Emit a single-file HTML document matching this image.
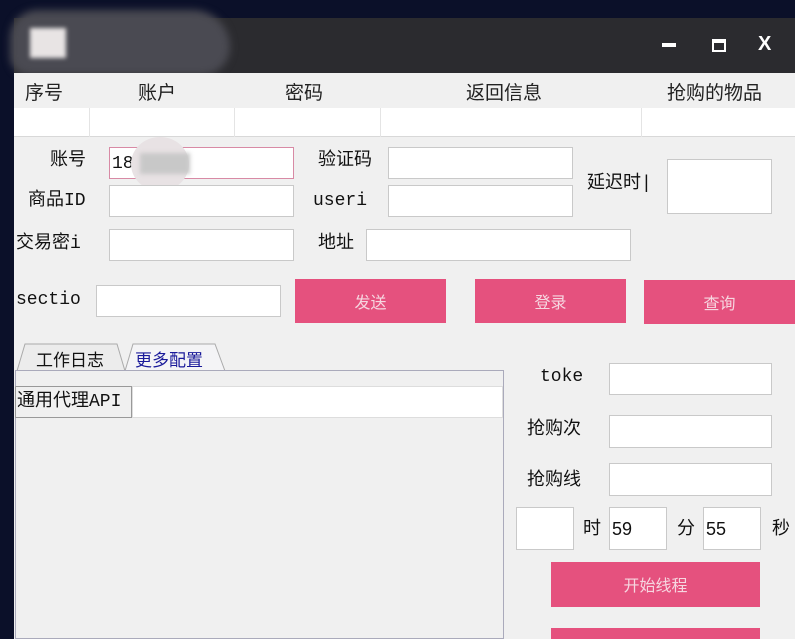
<!DOCTYPE html>
<html><head><meta charset="utf-8"><style>
*{margin:0;padding:0;box-sizing:border-box}
body{width:795px;height:639px;overflow:hidden;background:#0b1029;position:relative;font-family:"Liberation Mono","Noto Sans CJK SC",monospace;font-size:18px;color:#111}
.a{position:absolute}
.in{position:absolute;background:#fff;border:1px solid #c9c9c9}
.lb{position:absolute;white-space:nowrap;line-height:22px}
.bt{position:absolute;background:#e5517e;color:#f6d6e0;text-align:center;font-family:"Noto Sans CJK SC",sans-serif;font-size:16px}
.hd{position:absolute;top:78px;font-family:"Noto Sans CJK SC",sans-serif;font-size:19px;color:#222}
</style></head><body>
<div class="a" style="left:14px;top:18px;width:781px;height:55px;background:#2b2b2f"></div>
<div class="a" style="left:10px;top:10px;width:220px;height:65px;border-radius:30px 40px 30px 20px;background:#4a4a52;filter:blur(4px)"></div>
<div class="a" style="left:30px;top:28px;width:36px;height:30px;background:#e8e4e4;filter:blur(2px)"></div>
<div class="a" style="left:662px;top:43px;width:14px;height:4px;background:#fff"></div>
<div class="a" style="left:712px;top:39px;width:14px;height:13px;border:2px solid #fff;border-top-width:4px"></div>
<div class="lb" style="left:758px;top:33px;color:#fff;font-family:'Liberation Sans';font-size:20px;font-weight:bold">X</div>
<div class="a" style="left:14px;top:73px;width:781px;height:566px;background:#f0f0f0"></div>
<div class="a" style="left:14px;top:73px;width:781px;height:35px;background:#f0f0f0"></div>
<div class="a" style="left:14px;top:108px;width:781px;height:29px;background:#fff;border-bottom:1px solid #d8d8d8"></div>
<div class="a" style="left:89px;top:108px;width:1px;height:29px;background:#e4e4e4"></div>
<div class="a" style="left:234px;top:108px;width:1px;height:29px;background:#e4e4e4"></div>
<div class="a" style="left:380px;top:108px;width:1px;height:29px;background:#e4e4e4"></div>
<div class="a" style="left:641px;top:108px;width:1px;height:29px;background:#e4e4e4"></div>
<div class="hd" style="left:25px">序号</div>
<div class="hd" style="left:138px">账户</div>
<div class="hd" style="left:285px">密码</div>
<div class="hd" style="left:466px">返回信息</div>
<div class="hd" style="left:667px">抢购的物品</div>

<div class="lb" style="left:50px;top:150px">账号</div>
<div class="in" style="left:109px;top:147px;width:185px;height:32px;border-color:#d88aa5"></div>
<div class="lb" style="left:112px;top:153px">18</div>
<div class="a" style="left:131px;top:137px;width:58px;height:54px;border-radius:50%;background:#e8e2e4"></div>
<div class="a" style="left:140px;top:153px;width:50px;height:21px;background:#c8c8c8;filter:blur(2px)"></div>
<div class="lb" style="left:28px;top:190px">商品ID</div>
<div class="in" style="left:109px;top:185px;width:185px;height:32px"></div>
<div class="lb" style="left:16px;top:233px">交易密i</div>
<div class="in" style="left:109px;top:229px;width:185px;height:32px"></div>
<div class="lb" style="left:16px;top:289px">sectio</div>
<div class="in" style="left:96px;top:285px;width:185px;height:32px"></div>
<div class="lb" style="left:318px;top:150px">验证码</div>
<div class="in" style="left:388px;top:147px;width:185px;height:32px"></div>
<div class="lb" style="left:313px;top:190px">useri</div>
<div class="in" style="left:388px;top:185px;width:185px;height:32px"></div>
<div class="lb" style="left:318px;top:233px">地址</div>
<div class="in" style="left:366px;top:229px;width:265px;height:32px"></div>
<div class="lb" style="left:587px;top:173px">延迟时|</div>
<div class="in" style="left:667px;top:159px;width:105px;height:55px"></div>
<div class="bt" style="left:295px;top:279px;width:151px;height:44px;line-height:44px">发送</div>
<div class="bt" style="left:475px;top:279px;width:151px;height:44px;line-height:44px">登录</div>
<div class="bt" style="left:644px;top:280px;width:151px;height:44px;line-height:44px">查询</div>

<svg class="a" style="left:15px;top:341px" width="220" height="32"><path d="M2 30 L10 3 H102 L110 30" fill="#ececec" stroke="#aaa"/><path d="M110 30 L118 3 H200 L210 30" fill="#f4f4f6" stroke="#aaa"/></svg>
<div class="lb" style="left:36px;top:348px;font-family:'Noto Sans CJK SC';font-size:17px">工作日志</div>
<div class="lb" style="left:135px;top:348px;font-family:'Noto Sans CJK SC';font-size:17px;color:#1a1a9a">更多配置</div>
<div class="a" style="left:15px;top:370px;width:489px;height:269px;border:1px solid #aab;background:#f0f0f0"></div>
<div class="a" style="left:15px;top:386px;width:117px;height:32px;border:1px solid #999;background:#f0f0f0"></div>
<div class="lb" style="left:17px;top:391px">通用代理API</div>
<div class="in" style="left:132px;top:386px;width:371px;height:32px;border-color:#ddd"></div>

<div class="lb" style="left:540px;top:366px">toke</div>
<div class="in" style="left:609px;top:363px;width:163px;height:32px"></div>
<div class="lb" style="left:527px;top:419px">抢购次</div>
<div class="in" style="left:609px;top:415px;width:163px;height:33px"></div>
<div class="lb" style="left:527px;top:470px">抢购线</div>
<div class="in" style="left:609px;top:463px;width:163px;height:33px"></div>
<div class="in" style="left:516px;top:507px;width:58px;height:43px"></div>
<div class="lb" style="left:583px;top:519px">时</div>
<div class="in" style="left:609px;top:507px;width:58px;height:43px"></div>
<div class="lb" style="left:612px;top:518px;font-family:'Liberation Sans'">59</div>
<div class="lb" style="left:677px;top:519px">分</div>
<div class="in" style="left:703px;top:507px;width:58px;height:43px"></div>
<div class="lb" style="left:706px;top:518px;font-family:'Liberation Sans'">55</div>
<div class="lb" style="left:772px;top:519px">秒</div>
<div class="bt" style="left:551px;top:562px;width:209px;height:45px;line-height:45px">开始线程</div>
<div class="bt" style="left:551px;top:628px;width:209px;height:11px"></div>
</body></html>
